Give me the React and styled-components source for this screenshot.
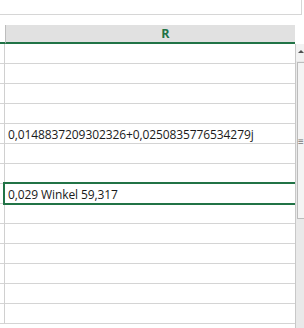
import React from 'react';
import styled, { createGlobalStyle } from 'styled-components';

const Global = createGlobalStyle`
  html, body { margin: 0; padding: 0; background: #fff; }
  body { font-family: "Open Sans", "Liberation Sans", sans-serif; overflow: hidden; }
`;

const rows = [
  '', '', '', '', '0,0148837209302326+0,0250835776534279j', '', '',
  '0,029 Winkel 59,317', '', '', '', '', '', '',
];
const selectedRow = 7;

const App = () => {
  return (
    <Page>
      <Global />
      <FormulaBar />
      <Sheet>
        <GridArea>
          <HeaderRow>
            <Corner />
            <ColHeader>R</ColHeader>
          </HeaderRow>
          {rows.map((text, i) => (
            <Row key={i}>
              <RowHead />
              <Cell selected={i === selectedRow}>{text}</Cell>
            </Row>
          ))}
        </GridArea>
        <ScrollCol>
          <Spacer />
          <ScrollTrack>
            <ArrowUp />
            <Thumb>
              <Grip>≡</Grip>
            </Thumb>
          </ScrollTrack>
        </ScrollCol>
      </Sheet>
    </Page>
  );
};

export default App;

const Page = styled.div`
  width: 304px;
  height: 328px;
  display: flex;
  flex-direction: column;
  overflow: hidden;
`;

const FormulaBar = styled.div`
  width: 301px;
  height: 14px;
  border-bottom: 1px solid #d6d6d6;
  border-right: 1px solid #d6d6d6;
  margin-bottom: 10px;
`;

const Sheet = styled.div`
  display: flex;
  flex: 1;
`;

const GridArea = styled.div`
  width: 295px;
  display: flex;
  flex-direction: column;
  overflow: hidden;
`;

const HeaderRow = styled.div`
  display: flex;
  height: 19px;
`;

const Corner = styled.div`
  width: 5px;
  box-sizing: border-box;
  border-bottom: 2px solid #217346;
  background: #fff;
`;

const ColHeader = styled.div`
  width: 290px;
  box-sizing: border-box;
  background: #e1e1e1;
  border-left: 1px solid #bdbdbd;
  border-bottom: 2px solid #217346;
  color: #217346;
  font-family: "Open Sans", "Liberation Sans", sans-serif;
  font-weight: 700;
  font-size: 12.5px;
  display: flex;
  align-items: center;
  justify-content: center;
  padding-left: 30px;
  padding-bottom: 1px;
`;

const Row = styled.div`
  display: flex;
  height: 20px;
`;

const RowHead = styled.div`
  width: 5px;
  flex-shrink: 0;
  box-sizing: border-box;
  border-right: 1px solid #d0d0d0;
  border-bottom: 1px solid #d4d4d4;
`;

const Cell = styled.div`
  position: relative;
  width: 290px;
  flex-shrink: 0;
  box-sizing: border-box;
  border-bottom: 1px solid #d4d4d4;
  padding-left: 3px;
  padding-top: 1px;
  font-family: "Open Sans", "Liberation Sans", sans-serif;
  font-size: 12px;
  letter-spacing: -0.1px;
  color: #1a1a1a;
  line-height: 19px;
  white-space: nowrap;
  &::after {
    content: '';
    display: ${props => (props.selected ? 'block' : 'none')};
    position: absolute;
    left: -2px;
    right: -10px;
    top: -2px;
    bottom: -2px;
    border: 2px solid #217346;
    pointer-events: none;
  }
`;

const ScrollCol = styled.div`
  width: 9px;
  display: flex;
  flex-direction: column;
`;

const Spacer = styled.div`
  height: 19px;
`;

const ScrollTrack = styled.div`
  flex: 1;
  background: #e9e9e9;
  border-left: 1px solid #c8c8c8;
  display: flex;
  flex-direction: column;
`;

const ArrowUp = styled.div`
  height: 17px;
  background: #f2f2f2;
  position: relative;
  &::before {
    content: '';
    position: absolute;
    left: 2px;
    top: 6px;
    border-left: 3px solid transparent;
    border-right: 3px solid transparent;
    border-bottom: 3px solid #505050;
  }
`;

const Thumb = styled.div`
  margin-top: 1px;
  margin-left: 1px;
  height: 155px;
  background: #f4f4f4;
  border: 1px solid #bcbcbc;
  border-right: none;
  display: flex;
  align-items: center;
  justify-content: center;
`;

const Grip = styled.span`
  font-size: 10px;
  color: #777;
  line-height: 1;
`;
